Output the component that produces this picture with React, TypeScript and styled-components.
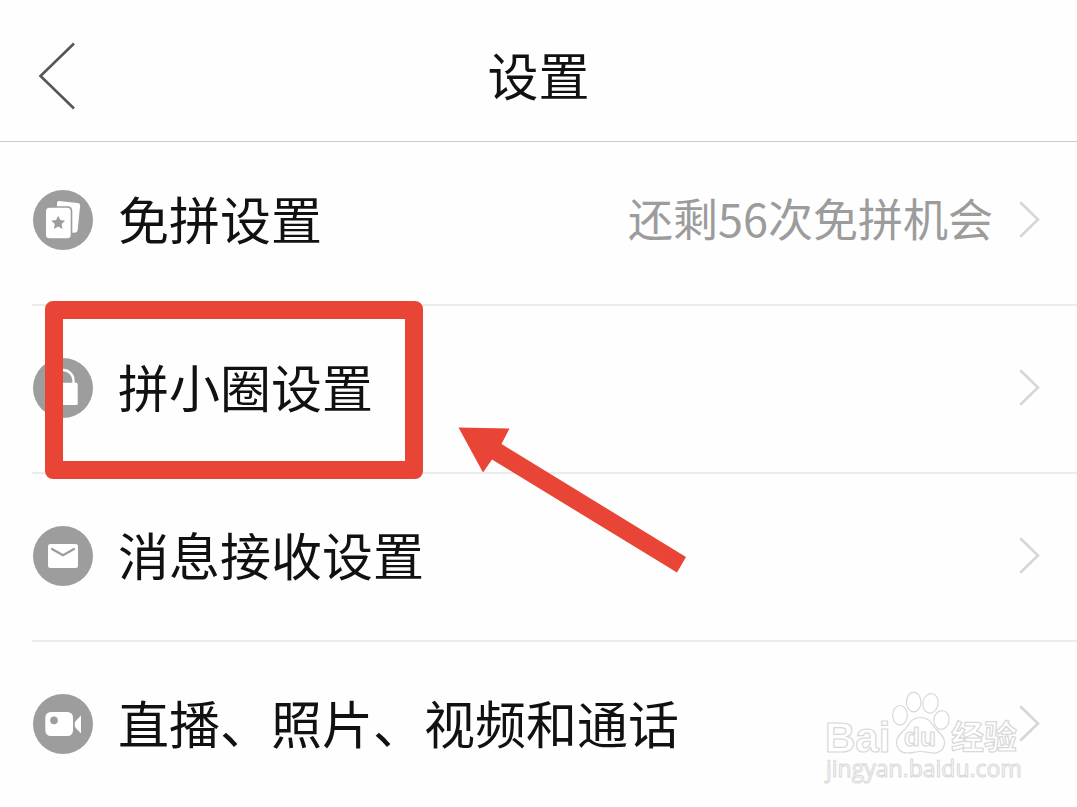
import React from "react";
import styled, { createGlobalStyle } from "styled-components";

const GlobalStyle = createGlobalStyle`
  *, *::before, *::after { box-sizing: border-box; }
  body {
    margin: 0;
    background: #fefefe;
    color: #111;
    font-family: "Noto Sans CJK SC", sans-serif;
  }
`;

const Page = styled.main`
  position: relative;
  overflow: hidden;
`;

const Header = styled.header`
  display: grid;
  grid-template-columns: 120px 1fr 120px;
  align-items: center;
  height: 142px;
  padding-bottom: 12px;
  padding-top: 22px;
  border-bottom: 1px solid #cacaca;
`;

const BackButton = styled.button`
  display: flex;
  justify-content: flex-start;
  padding: 0 0 0 36px;
  border: 0;
  background: none;
  cursor: pointer;
`;

const Title = styled.h1`
  margin: 0;
  padding-bottom: 4px;
  font-size: 51px;
  line-height: 56px;
  font-weight: 400;
  text-align: center;
`;

const List = styled.ul`
  margin: 0;
  padding: 0 0 0 32px;
  list-style: none;
`;

const Item = styled.li`
  position: relative;
  border-bottom: 2px solid #ebebeb;

  &:last-child {
    border-bottom: 0;
  }
`;

const RowLink = styled.a<{ $first: boolean }>`
  display: flex;
  align-items: center;
  padding: ${(p) => (p.$first ? 48 : 52)}px 36px 54px 1px;
  color: inherit;
  text-decoration: none;

  ${Item}:last-child & {
    padding-bottom: 52px;
  }
`;

const RowIcon = styled.svg`
  flex: none;
  width: 60px;
  height: 60px;
  margin-right: 25px;
`;

const Label = styled.span`
  flex: 1;
  padding-bottom: 4px;
  font-size: 51px;
  line-height: 56px;
  white-space: nowrap;
`;

const Value = styled.span`
  margin-right: 24px;
  padding-bottom: 4px;
  color: #9c9c9c;
  font-size: 45px;
  line-height: 56px;
  white-space: nowrap;
`;

const ChevronIcon = styled.svg`
  flex: none;
  width: 24px;
  height: 40px;
`;

const HighlightFrame = styled.div`
  position: absolute;
  top: -5px;
  left: 13px;
  z-index: 1;
  width: 378px;
  height: 178px;
  border: 18px solid #e94537;
  border-radius: 8px;
  pointer-events: none;
`;

const HighlightArrow = styled.svg`
  position: absolute;
  top: 120px;
  left: 426px;
  z-index: 1;
  width: 230px;
  height: 150px;
  pointer-events: none;
`;

const WatermarkLogo = styled.svg`
  position: absolute;
  right: 47px;
  bottom: 18px;
  width: 210px;
  height: 100px;
  pointer-events: none;
`;

const GREY = "#9d9d9d";

const CardsGlyph = () => (
  <>
    <path
      d="M26 11 L44.6 13 Q47.4 13.4 47.1 16 L44.6 40.5 Q44.2 42.6 42 42.8 L24 42 V13 Q24 11 26 11Z"
      fill="#fff"
    />
    <rect x="12" y="16.3" width="27.3" height="33.5" rx="4.5" fill={GREY} />
    <rect x="13" y="17.7" width="24.7" height="30.6" rx="3.5" fill="#fff" />
    <path
      d="M25.2 25.7 L27.3 30.1 L32.1 30.7 L28.6 34 L29.5 38.9 L25.2 36.5 L20.9 38.9 L21.8 34 L18.3 30.7 L23.1 30.1Z"
      fill={GREY}
    />
  </>
);

const LockGlyph = () => (
  <>
    <path d="M19.5 26 V22.5 a10.5 10.5 0 0 1 21 0 V26" fill="none" stroke="#fff" strokeWidth="2.4" />
    <rect x="15.3" y="24.7" width="29.4" height="22.3" rx="1.5" fill="#fff" />
  </>
);

const MailGlyph = () => (
  <>
    <rect x="15" y="18" width="30" height="24" rx="2.5" fill="#fff" />
    <path
      d="M19 23 L30 29.3 L41 23"
      fill="none"
      stroke={GREY}
      strokeWidth="2.2"
      strokeLinecap="round"
      strokeLinejoin="round"
    />
  </>
);

const CameraGlyph = () => (
  <>
    <rect x="12.3" y="18" width="27.7" height="24" rx="5.5" fill="#fff" />
    <circle cx="21" cy="26.4" r="3.8" fill={GREY} />
    <path d="M48 21.5 V39.5 L43.2 34.6 Q41.6 33 41.6 30.5 Q41.6 28 43.2 26.4Z" fill="#fff" />
  </>
);

const Chevron = () => (
  <ChevronIcon viewBox="0 0 24 40" aria-hidden="true">
    <path
      d="M4 3 L21 19.5 L4 36"
      fill="none"
      stroke="#d6d6d6"
      strokeWidth="2.6"
      strokeLinecap="round"
    />
  </ChevronIcon>
);

interface Setting {
  label: string;
  value?: string;
  glyph: React.ReactNode;
  highlighted?: boolean;
}

const settings: Setting[] = [
  { label: "免拼设置", value: "还剩56次免拼机会", glyph: <CardsGlyph /> },
  { label: "拼小圈设置", glyph: <LockGlyph />, highlighted: true },
  { label: "消息接收设置", glyph: <MailGlyph /> },
  { label: "直播、照片、视频和通话", glyph: <CameraGlyph /> },
];

const Watermark = () => (
  <WatermarkLogo viewBox="0 0 210 100" role="img" aria-label="Baidu 经验">
    <g
      fill="#fff"
      stroke="#d8d8d8"
      strokeWidth="1.2"
      strokeLinejoin="round"
      fontFamily='"Liberation Sans", "Noto Sans CJK SC", sans-serif'
    >
      <text x="5" y="64" fontSize="42" fontWeight="700">Bai</text>
      <ellipse cx="80" cy="27.3" rx="7.4" ry="9.8" />
      <ellipse cx="93.7" cy="14" rx="7.3" ry="9.8" />
      <ellipse cx="110.5" cy="15.4" rx="7.6" ry="9.8" transform="rotate(10 110.5 15.4)" />
      <ellipse cx="121.5" cy="32" rx="7.6" ry="9.4" transform="rotate(10 121.5 32)" />
      <path d="M100.5 29.5 C108 29.5 111 34 114 39 C118 44 125 48 124.5 55 C124 62 119 65.5 113 65 C107 64.5 105 63.5 100.5 63.5 C96 63.5 93 65 87 65 C81 65 77 61 76.5 55 C76 48 83 44 87 39 C90 34 93 29.5 100.5 29.5Z" />
      <text x="84" y="58" fontSize="26" fontWeight="700">du</text>
      <text x="131" y="61" fontSize="33" fontWeight="700">经验</text>
      <text x="6" y="89" fontSize="23" strokeWidth="1" fontFamily='"Open Sans", sans-serif'>
        jingyan.baidu.com
      </text>
    </g>
  </WatermarkLogo>
);

export default function App() {
  return (
    <Page>
      <GlobalStyle />
      <Header>
        <BackButton type="button" aria-label="返回">
          <svg width="42" height="70" viewBox="0 0 42 70" aria-hidden="true">
            <path d="M38 2.5 L4.5 35 L38 67.5" fill="none" stroke="#555" strokeWidth="2.6" />
          </svg>
        </BackButton>
        <Title>设置</Title>
      </Header>
      <List>
        {settings.map((s, i) => (
          <Item key={s.label}>
            <RowLink href="#" $first={i === 0}>
              <RowIcon viewBox="0 0 60 60" aria-hidden="true">
                <circle cx="30" cy="30" r="30" fill={GREY} />
                {s.glyph}
              </RowIcon>
              <Label>{s.label}</Label>
              {s.value && <Value>{s.value}</Value>}
              <Chevron />
            </RowLink>
            {s.highlighted && (
              <>
                <HighlightFrame />
                <HighlightArrow viewBox="0 0 230 150" aria-hidden="true">
                  <path
                    d="M0.5 1.5 L51.5 2.5 L43.5 18 L228 131 L219 146.5 L34 33.5 L25 46.5Z"
                    fill="#e94537"
                  />
                </HighlightArrow>
              </>
            )}
          </Item>
        ))}
      </List>
      <Watermark />
    </Page>
  );
}
